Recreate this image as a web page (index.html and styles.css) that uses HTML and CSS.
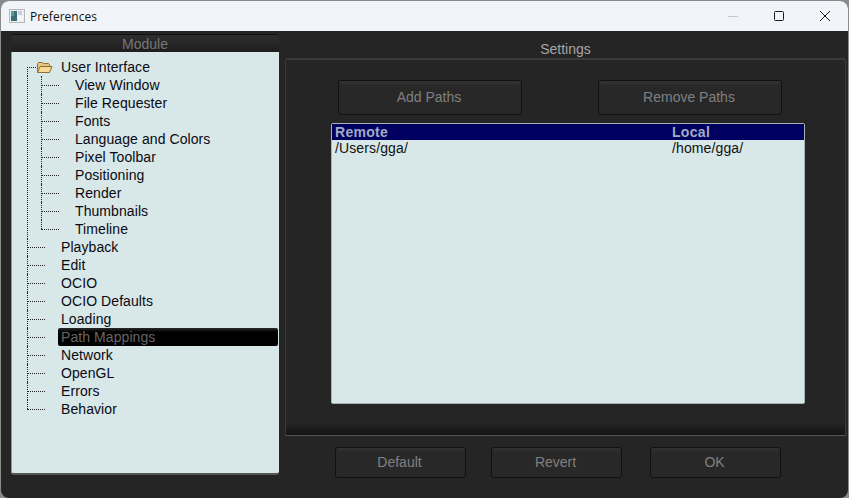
FILE: index.html
```html
<!DOCTYPE html>
<html lang="en">
<head>
  <meta charset="UTF-8" />
  <meta name="viewport" content="width=device-width, initial-scale=1.0" />
  <title>Preferences</title>
  <link rel="stylesheet" href="styles.css">
</head>
<body>
  <div class="window">
    <header class="titlebar">
      <svg class="app-icon" width="16" height="14" viewBox="0 0 16 14">
        <rect x="0.5" y="0.5" width="15" height="13" fill="#eceef0" stroke="#b4b8bc"/>
        <rect x="2" y="2" width="6" height="10" fill="#3b6f78"/>
        <rect x="2" y="2" width="3" height="5" fill="#5c9a96"/>
        <rect x="9" y="2" width="4" height="4" fill="#c6d2da"/>
        <rect x="9" y="7" width="5" height="5" fill="#f5f6f7"/>
      </svg>
      <span class="title">Preferences</span>
      <div class="controls">
        <svg class="control" width="46" height="30" viewBox="0 0 46 30"><path d="M18 15.5h10" stroke="#c4c6c9" fill="none"/></svg>
        <svg class="control" width="46" height="30" viewBox="0 0 46 30"><rect x="18.5" y="10.5" width="9" height="9" rx="1" fill="none" stroke="#1a1a1a"/></svg>
        <svg class="control" width="46" height="30" viewBox="0 0 46 30"><path d="M18 10l10 10M28 10L18 20" stroke="#1a1a1a" fill="none"/></svg>
      </div>
    </header>

    <div class="content">
      <section class="module">
        <div class="module-tab">Module</div>
        <ul class="tree">
          <li class="row root">
            <svg class="folder" width="17" height="13" viewBox="0 0 17 13">
              <path d="M1.5 11.5V2.5l1-1h4l1 1h5l1 1v2" fill="#e8c47e" stroke="#8f6f32"/>
              <path d="M1.5 11.5l2.5-6h12l-2.5 6z" fill="#f6d898" stroke="#8f6f32"/>
            </svg>
            User Interface
          </li>
          <li class="row child">View Window</li>
          <li class="row child">File Requester</li>
          <li class="row child">Fonts</li>
          <li class="row child">Language and Colors</li>
          <li class="row child">Pixel Toolbar</li>
          <li class="row child">Positioning</li>
          <li class="row child">Render</li>
          <li class="row child">Thumbnails</li>
          <li class="row child last">Timeline</li>
          <li class="row top">Playback</li>
          <li class="row top">Edit</li>
          <li class="row top">OCIO</li>
          <li class="row top">OCIO Defaults</li>
          <li class="row top">Loading</li>
          <li class="row top"><span class="selected">Path Mappings</span></li>
          <li class="row top">Network</li>
          <li class="row top">OpenGL</li>
          <li class="row top">Errors</li>
          <li class="row top last">Behavior</li>
        </ul>
      </section>

      <section class="settings">
        <div class="settings-label">Settings</div>
        <div class="panel">
          <div class="path-buttons">
            <button class="btn btn-path">Add Paths</button>
            <button class="btn btn-path">Remove Paths</button>
          </div>
          <div class="paths">
            <div class="paths-row paths-head"><span>Remote</span><span>Local</span></div>
            <div class="paths-row"><span>/Users/gga/</span><span>/home/gga/</span></div>
          </div>
        </div>
        <div class="footer">
          <button class="btn btn-small">Default</button>
          <button class="btn btn-small">Revert</button>
          <button class="btn btn-small btn-ok">OK</button>
        </div>
      </section>
    </div>
  </div>
</body>
</html>
```

FILE: styles.css
```css
body {
  margin: 0;
  background-color: #8a8a8a;
  font-family: "Liberation Sans", Arial, sans-serif;
  font-size: 14px;
  overflow: hidden;
}

.window {
  height: 497px;
  margin: 1px 1px 0 1px;
  border-radius: 8px;
  background-color: #252525;
  display: flex;
  flex-direction: column;
  overflow: hidden;
}

.titlebar {
  height: 30px;
  flex: none;
  background-color: #f1f5fa;
  display: flex;
  align-items: center;
  padding-left: 8px;
}

.app-icon {
  margin-right: 5px;
}

.title {
  font-family: "Open Sans", sans-serif;
  font-size: 12px;
  color: #111;
  padding-top: 1px;
}

.controls {
  margin-left: auto;
  display: flex;
}

.content {
  flex: 1;
  display: flex;
  padding: 3px 2px 0 10px;
}

/* left column */
.module {
  width: 268px;
  flex: none;
}

.module-tab {
  height: 18px;
  line-height: 19px;
  text-align: center;
  color: #777;
  background: linear-gradient(#2e2e2e, #1e1e1e);
  border-radius: 3px 3px 0 0;
  border-top: 1px solid #111;
  box-sizing: border-box;
}

.tree {
  list-style: none;
  margin: 0;
  padding: 6px 0 0 0;
  height: 423px;
  box-sizing: border-box;
  background-color: #d8e7e7;
  border-left: 1px solid #8b9999;
  border-bottom: 2px solid #555;
  border-radius: 0 0 3px 3px;
}

.row {
  height: 18px;
  line-height: 18px;
  color: #0a0a14;
  position: relative;
  white-space: nowrap;
  letter-spacing: 0.08px;
}

/* dotted tree lines */
.row::before,
.row::after {
  content: "";
  position: absolute;
}

.row::before {
  top: 9px;
  height: 0;
  width: 18px;
  border-top: 1px dotted #222;
}

.row::after {
  top: 0;
  height: 18px;
  width: 0;
  border-left: 1px dotted #222;
}

.row.last::after {
  height: 9px;
}

.root,
.top {
  padding-left: 49px;
}

.top::before,
.top::after {
  left: 15px;
}

.root::before {
  left: 15px;
  width: 9px;
}

.root::after {
  left: 15px;
  top: 9px;
  height: 9px;
}

.child {
  padding-left: 63px;
  /* trunk line running past the children */
  background-image: repeating-linear-gradient(#222 0 1px, transparent 1px 2px);
  background-size: 1px 18px;
  background-position: 15px 0;
  background-repeat: no-repeat;
}

.child::before,
.child::after {
  left: 29px;
}

.folder {
  position: absolute;
  left: 24px;
  top: 3px;
}

.selected {
  display: block;
  width: 217px;
  margin-left: -3px;
  padding-left: 3px;
  color: #666;
  background: linear-gradient(#2a2a2a, #000 4px);
  border-radius: 2px;
}

/* right column */
.settings {
  flex: 1;
  margin-left: 6px;
  display: flex;
  flex-direction: column;
  min-width: 0;
}

.settings-label {
  height: 24px;
  line-height: 30px;
  text-align: center;
  color: #a6a6a6;
}

.panel {
  height: 378px;
  box-sizing: border-box;
  border: 1px solid #3a3a3a;
  border-top-width: 2px;
  border-bottom-color: #555;
  border-radius: 3px 3px 0 0;
  padding: 20px 0 0 45px;
  background: linear-gradient(#252525 362px, #141414);
}

.path-buttons {
  display: flex;
  padding-left: 7px;
  gap: 76px;
}

.btn {
  font: inherit;
  color: #808080;
  background: linear-gradient(#333, #282828 14%);
  border: 1px solid #111;
  border-radius: 3px;
  padding: 0 2px 2px 0;
}

.btn-path {
  width: 184px;
  height: 35px;
}

.paths {
  margin-top: 8px;
  width: 474px;
  height: 281px;
  box-sizing: border-box;
  background-color: #d8e7e7;
  border: 1px solid #a7b3b3;
  border-radius: 2px;
}

.paths-row {
  display: flex;
  height: 16px;
  line-height: 16px;
  padding-left: 3px;
  color: #111;
  letter-spacing: 0.12px;
}

.paths-row span:first-child {
  width: 337px;
}

.paths-head {
  background-color: #000060;
  color: #a3abc3;
  font-weight: bold;
  letter-spacing: 0.3px;
}

.footer {
  display: flex;
  padding: 11px 0 0 50px;
  gap: 25px;
}

.btn-small {
  width: 131px;
  height: 31px;
}

.btn-ok {
  margin-left: 3px;
}
```
